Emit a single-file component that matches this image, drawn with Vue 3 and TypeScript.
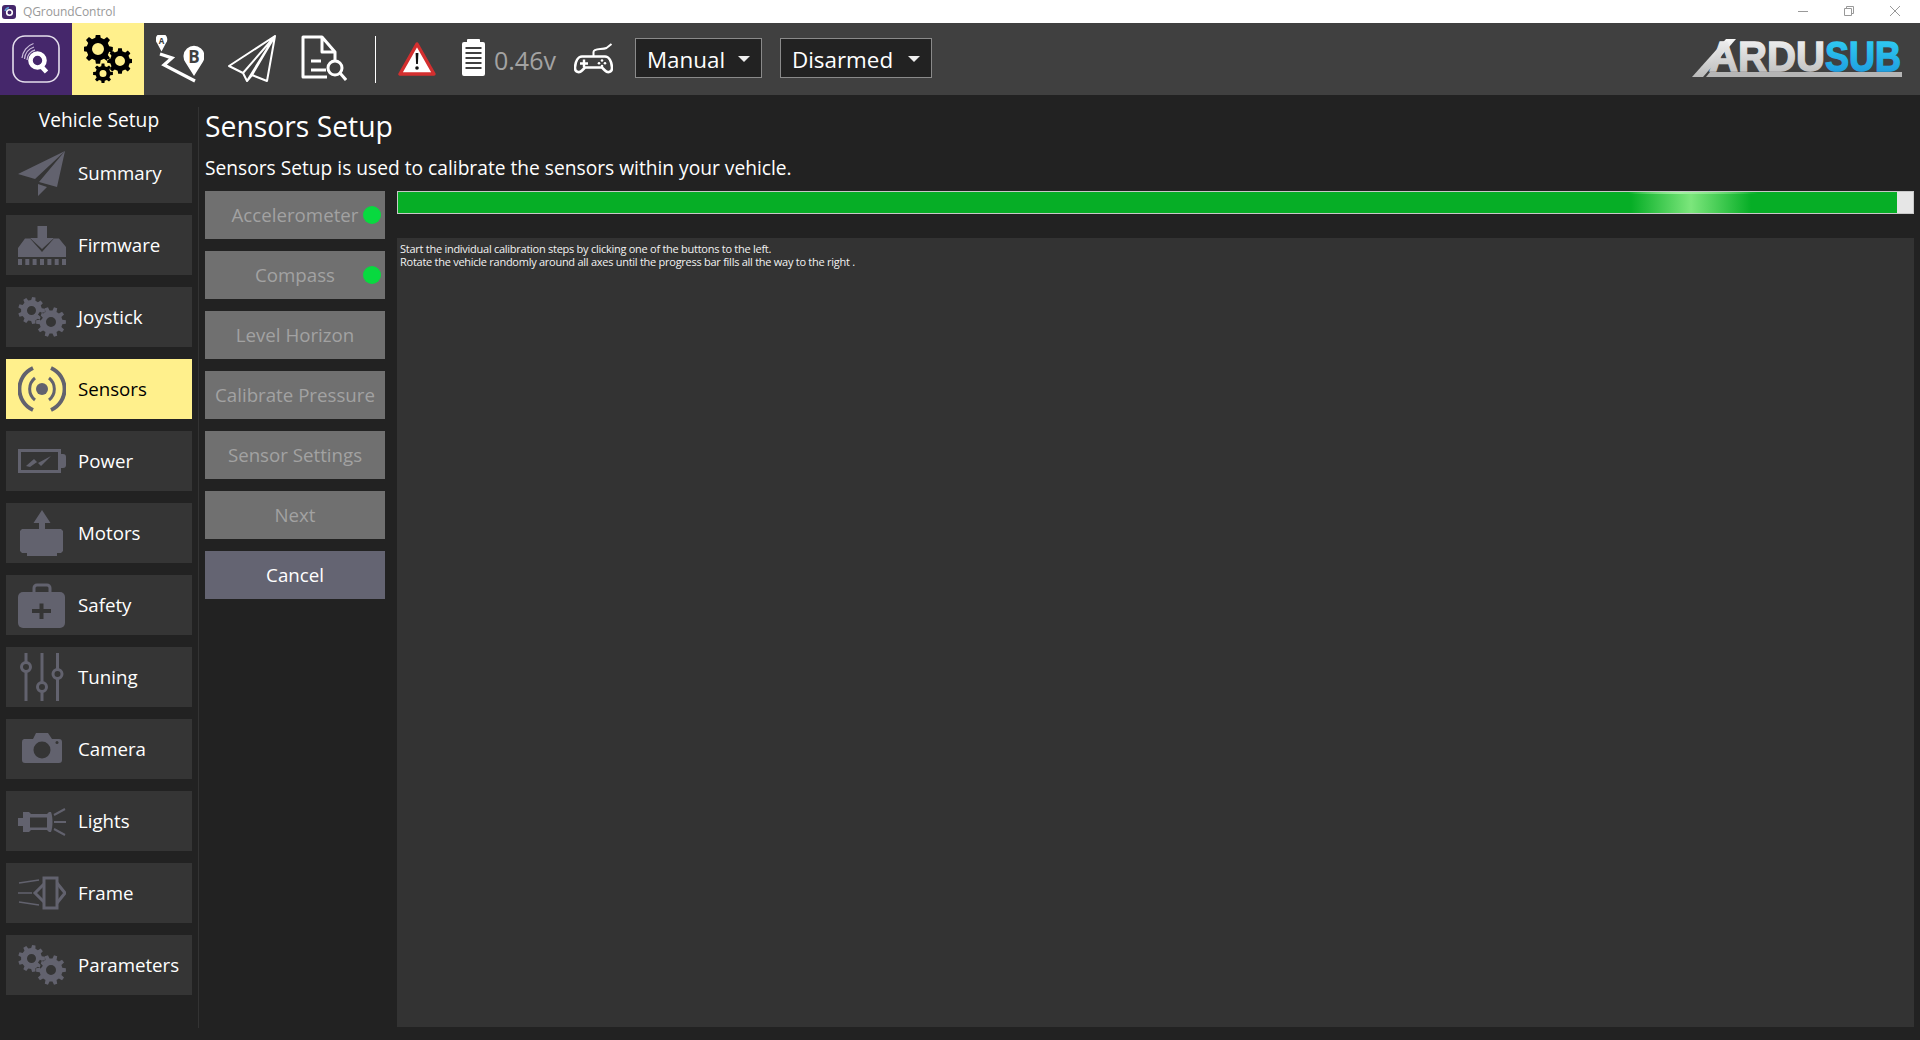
<script setup lang="ts">
function gear(cx: number, cy: number, ro: number, ri: number, rh: number, n: number): string {
  const pts: string[] = []
  const step = (Math.PI * 2) / n
  for (let i = 0; i < n; i++) {
    const a = i * step
    const offs: [number, number][] = [
      [-0.3, ri],
      [-0.18, ro],
      [0.18, ro],
      [0.3, ri],
    ]
    for (const [o, r] of offs) {
      const t = a + o * step
      pts.push(`${(cx + r * Math.cos(t)).toFixed(2)} ${(cy + r * Math.sin(t)).toFixed(2)}`)
    }
  }
  const hole = `M${cx - rh} ${cy}a${rh} ${rh} 0 1 0 ${rh * 2} 0a${rh} ${rh} 0 1 0 ${-rh * 2} 0Z`
  return `M${pts.join('L')}Z${hole}`
}

const smallGears = `${gear(13.5, 17.5, 13.5, 10.5, 4.5, 9)}${gear(33, 29, 15, 11.5, 5, 10)}`
const toolbarGears = `${gear(14, 14, 15, 11.5, 6, 8)}${gear(36, 26, 13, 10, 5, 8)}${gear(19, 38.500, 10, 7.500, 3.500, 8)}`

const items = ['Summary', 'Firmware', 'Joystick', 'Sensors', 'Power', 'Motors', 'Safety', 'Tuning', 'Camera', 'Lights', 'Frame', 'Parameters']

interface CalBtn {
  label: string
  done?: boolean
  active?: boolean
}
const calButtons: CalBtn[] = [
  { label: 'Accelerometer', done: true },
  { label: 'Compass', done: true },
  { label: 'Level Horizon' },
  { label: 'Calibrate Pressure' },
  { label: 'Sensor Settings' },
  { label: 'Next' },
  { label: 'Cancel', active: true },
]
</script>

<template>
  <div class="app">
    <header class="titlebar">
      <svg class="app-icon" viewBox="0 0 14 14" width="14" height="14">
        <rect width="14" height="14" rx="3" fill="#45276b" />
        <circle cx="7.500" cy="7.500" r="2.800" fill="none" stroke="#fff" stroke-width="1.600" />
        <path d="M3 6a5 5 0 0 1 4-3.500" fill="none" stroke="#5b9bd5" stroke-width="1.500" />
      </svg>
      <span class="app-name">QGroundControl</span>
      <div class="win-controls">
        <svg viewBox="0 0 10 10" width="10" height="10"><path d="M0 5.500h10" stroke="#999" fill="none" /></svg>
        <svg viewBox="0 0 10 10" width="10" height="10"><path d="M.5 2.500h7v7h-7zM2.500 2.500v-2h7v7h-2" stroke="#999" fill="none" /></svg>
        <svg viewBox="0 0 10 10" width="10" height="10"><path d="M0 0l10 10M10 0L0 10" stroke="#999" fill="none" /></svg>
      </div>
    </header>

    <nav class="toolbar">
      <div class="tool-btn purple">
        <svg viewBox="0 0 48 48" width="48" height="48">
          <rect x="1" y="1" width="46" height="46" rx="12" fill="none" stroke="#e4deec" stroke-width="1.600" />
          <circle cx="25.500" cy="25.500" r="7" fill="none" stroke="#fff" stroke-width="4.600" />
          <path d="M28 30l6.500 7" stroke="#fff" stroke-width="4.600" fill="none" />
          <path d="M15 25a11 11 0 0 1 8-10M12.500 24a14 14 0 0 1 9.500-12M10 23a17 17 0 0 1 11.500-14.500" fill="none" stroke="#c9bcd9" stroke-width="1.300" />
        </svg>
      </div>
      <div class="tool-btn yellow">
        <svg viewBox="0 0 48 48" width="48" height="48"><path :d="toolbarGears" fill="#000" fill-rule="evenodd" /></svg>
      </div>
      <svg class="t-route" viewBox="0 0 48 48" width="48" height="48">
        <path d="M5.500 16.500L1 8a5.800 5.800 0 1 1 9 0z" fill="#fff" />
        <path d="M38 41l-8.500-13.500a10.500 10.500 0 1 1 17 0z" fill="#fff" />
        <text x="5.600" y="9" class="pin-a">A</text>
        <text x="38" y="27.500" class="pin-b">B</text>
        <path d="M4 19l12 4-8 7 31 16" fill="none" stroke="#fff" stroke-width="3.200" />
      </svg>
      <svg class="t-plane" viewBox="0 0 48 48" width="48" height="48">
        <path d="M47 1L1 31l14 7 4 8 5-6 15 6zM47 1L15 38M47 1L19 46M47 1L24 40" fill="none" stroke="#fff" stroke-width="2" stroke-linejoin="round" />
      </svg>
      <svg class="t-doc" viewBox="0 0 46 48" width="46" height="48">
        <path d="M26 42H2V2h19l13 15v8M21 2v15h13" fill="none" stroke="#fff" stroke-width="3" stroke-linejoin="round" />
        <path d="M10 26h10M10 35h15" stroke="#fff" stroke-width="3" fill="none" />
        <circle cx="34" cy="33" r="7" fill="#404040" stroke="#fff" stroke-width="3" />
        <path d="M39 38l6 7" stroke="#fff" stroke-width="3" fill="none" />
      </svg>
      <div class="t-divider"></div>
      <svg class="t-warn" viewBox="0 0 38 35" width="38" height="35">
        <path d="M19 3L2 33h34z" fill="#fff" stroke="#d32f2f" stroke-width="3.400" stroke-linejoin="round" />
        <path d="M17.600 12h2.800l-.5 11h-1.800z" fill="#111" />
        <circle cx="19" cy="27" r="1.800" fill="#111" />
      </svg>
      <svg class="t-batt" viewBox="0 0 23 37" width="23" height="37">
        <path d="M6 0h11a1 1 0 0 1 1 1v2h3a2 2 0 0 1 2 2v30a2 2 0 0 1-2 2H2a2 2 0 0 1-2-2V5a2 2 0 0 1 2-2h3V1a1 1 0 0 1 1-1z" fill="#fff" />
        <path d="M3.500 9h16M3.500 14h16M3.500 19h16M3.500 24h16M3.500 29h16" stroke="#404040" stroke-width="2.200" />
      </svg>
      <span class="t-volt">0.46v</span>
      <svg class="t-pad" viewBox="0 0 39 31" width="39" height="31">
        <path d="M8 13.500h23c4 0 6.500 5 7 11 .3 4.500-4 6-7 3l-3-3H11l-3 3c-3 3-7.300 1.500-7-3 .5-6 3-11 7-11z" fill="none" stroke="#fff" stroke-width="2.600" />
        <path d="M19.500 13V9c0-4 9-2 13-4l5-4" fill="none" stroke="#fff" stroke-width="2" />
        <path d="M6 20.500h8M10 16.500v8" stroke="#fff" stroke-width="2.400" />
        <circle cx="28" cy="17.500" r="1.300" fill="#fff" /><circle cx="28" cy="23" r="1.300" fill="#fff" />
        <circle cx="25" cy="20.300" r="1.300" fill="#fff" /><circle cx="31" cy="20.300" r="1.300" fill="#fff" />
      </svg>
      <button class="combo combo-manual">Manual<i class="caret"></i></button>
      <button class="combo combo-disarmed">Disarmed<i class="caret"></i></button>
      <svg class="logo" viewBox="0 0 210 38" width="210" height="38">
        <defs>
          <linearGradient id="logoSilver" x1="0" y1="0" x2="0" y2="1">
            <stop offset="0" stop-color="#f8f8f8" /><stop offset="1" stop-color="#b9b9b9" />
          </linearGradient>
          <linearGradient id="logoBlue" x1="0" y1="0" x2="0" y2="1">
            <stop offset="0" stop-color="#33d4f6" /><stop offset="1" stop-color="#1b96dc" />
          </linearGradient>
        </defs>
        <path d="M0 38L34 0h10L11 38z" fill="url(#logoSilver)" />
        <path d="M14 38l4-5h192v5z" fill="#b5b5b5" />
        <text x="17" y="31.500" class="logo-text" textLength="116" lengthAdjust="spacingAndGlyphs" fill="url(#logoSilver)" stroke="url(#logoSilver)">ARDU</text>
        <text x="133" y="31.500" class="logo-text" textLength="76" lengthAdjust="spacingAndGlyphs" fill="url(#logoBlue)" stroke="url(#logoBlue)">SUB</text>
      </svg>
    </nav>

    <div class="body">
      <aside class="sidebar">
        <div class="side-title">Vehicle Setup</div>
        <div class="side-list">
          <div v-for="item in items" :key="item" class="side-btn" :class="{ selected: item === 'Sensors' }">
            <svg class="side-icon" viewBox="0 0 48 48" width="48" height="48">
              <template v-if="item === 'Summary'">
                <path d="M0 25L47 2 17 30zM47 2l-8 36-18-5zM20 35l9 3-9 9z" />
              </template>
              <template v-else-if="item === 'Firmware'">
                <path d="M19.500 5H29v12h7L24 28 12 17h7.500z" />
                <path d="M0 36v-9L7 17.500h5L24 31l12-13.500h5L48 26v10z" />
                <path d="M0 38h4v6H0zM7.300 38h4v6h-4zM14.600 38h4v6h-4zM22 38h4v6h-4zM29.400 38h4v6h-4zM36.700 38h4v6h-4zM44 38h4v6h-4z" />
              </template>
              <template v-else-if="item === 'Joystick' || item === 'Parameters'">
                <path :d="smallGears" fill-rule="evenodd" />
              </template>
              <template v-else-if="item === 'Sensors'">
                <circle cx="24" cy="24" r="6" />
                <path d="M17 13A14 14 0 0 0 17 35M31 13A14 14 0 0 1 31 35" class="ln" stroke-width="3" />
                <path d="M15 3A23 23 0 0 0 15 45M33 3A23 23 0 0 1 33 45" class="ln" stroke-width="4" />
              </template>
              <template v-else-if="item === 'Power'">
                <path d="M1.500 13.500h40v21h-40z" class="ln" stroke-width="3" />
                <path d="M43 17h2a3 3 0 0 1 3 3v8a3 3 0 0 1-3 3h-2z" />
                <path d="M8 29l8-7 4 4 13-7-10 10-4-4-7 5z" />
              </template>
              <template v-else-if="item === 'Motors'">
                <path d="M24 1l8.500 13H27v6h-6v-6h-5.500z" />
                <path d="M4 20h39l2 2v20l-2 2h-4v3H9v-3H4l-2-2V22z" />
              </template>
              <template v-else-if="item === 'Safety'">
                <path d="M16 12V7a3 3 0 0 1 3-3h10a3 3 0 0 1 3 3v5" class="ln" stroke-width="3" />
                <rect x="0" y="11" width="47" height="36" rx="5" />
                <path d="M21.500 22.500h4v5.500h7.500v4h-7.500v6h-4v-6H14v-4h7.500z" class="cut" />
              </template>
              <template v-else-if="item === 'Tuning'">
                <path d="M8 0v48M24 0v48M39.500 0v48" class="ln" stroke-width="3" />
                <circle cx="8" cy="14" r="4.500" class="knob" />
                <circle cx="24" cy="34" r="4.500" class="knob" />
                <circle cx="39.500" cy="21" r="4.500" class="knob" />
              </template>
              <template v-else-if="item === 'Camera'">
                <path d="M6 14h9l3-6h12l4 6h7a3 3 0 0 1 3 3v18a3 3 0 0 1-3 3H7a3 3 0 0 1-3-3V17a3 3 0 0 1 2-3z" />
                <circle cx="24" cy="25" r="8.500" class="cut" />
                <circle cx="39" cy="17.500" r="1.500" class="cut" />
              </template>
              <template v-else-if="item === 'Lights'">
                <path d="M5 15h6l2 2h16l2-2h2c2 5 2 15 0 20h-2l-2-2H13l-2 2H5zM12 20.500v10h17v-10z" fill-rule="evenodd" />
                <path d="M0 21h5v8H0z" />
                <path d="M36 18l11-6M36 25h12M36 32l11 6" class="ln" stroke-width="2" />
              </template>
              <template v-else-if="item === 'Frame'">
                <rect x="26" y="9" width="13" height="30" class="ln" stroke-width="3" />
                <path d="M26 15l-9 9 9 9M39 14l8 10-8 10" class="ln" stroke-width="3" />
                <path d="M1 14l20-3M0 24h14M1 33l20 3" class="ln" stroke-width="1.600" />
              </template>
            </svg>
            <span class="side-label">{{ item }}</span>
          </div>
        </div>
      </aside>

      <main class="main">
        <h1 class="heading">Sensors Setup</h1>
        <p class="desc">Sensors Setup is used to calibrate the sensors within your vehicle.</p>
        <div class="content">
          <div class="cal-list">
            <div v-for="b in calButtons" :key="b.label" class="cal-btn" :class="{ active: b.active }">
              {{ b.label }}
              <i v-if="b.done" class="dot"></i>
            </div>
          </div>
          <div class="cal-right">
            <div class="progress">
              <div class="fill"></div>
              <div class="glow"></div>
              <div class="glow-top"></div>
            </div>
            <div class="panel">
              Start the individual calibration steps by clicking one of the buttons to the left.<br />
              Rotate the vehicle randomly around all axes until the progress bar fills all the way to the right .
            </div>
          </div>
        </div>
      </main>
    </div>
  </div>
</template>

<style>
html, body { margin: 0; background: #222; }
</style>

<style scoped>
.app {
  width: 1920px;
  height: 1040px;
  overflow: hidden;
  display: flex;
  flex-direction: column;
  background: #222;
  color: #fff;
  font-family: "Open Sans", "Noto Sans", sans-serif;
}
.titlebar {
  height: 23px;
  background: #fff;
  display: flex;
  align-items: center;
  padding-left: 2px;
  flex: none;
}
.app-name { margin-left: 7px; font-size: 12px; color: #999; letter-spacing: -0.1px; }
.win-controls {
  margin-left: auto;
  margin-right: 20px;
  display: flex;
  gap: 36px;
  margin-top: -1px;
}
.toolbar {
  height: 72px;
  flex: none;
  background: #404040;
  display: flex;
  align-items: center;
}
.tool-btn {
  width: 72px;
  height: 72px;
  display: flex;
  align-items: center;
  justify-content: center;
}
.purple { background: #45276b; }
.yellow { background: #fff08c; }
.t-route { margin-left: 12px; }
.t-plane { margin-left: 24px; }
.t-doc { margin-left: 25px; }
.t-divider { width: 1px; height: 47px; background: #fff; margin-left: 28px; }
.t-warn { margin-left: 22px; margin-top: -1px; }
.t-batt { margin-left: 26px; margin-top: -3px; }
.t-volt { margin-left: 9px; font-size: 25px; color: #a3a3a3; line-height: 1; margin-top: 2px; }
.t-pad { margin-left: 18px; margin-top: -1px; }
.pin-a, .pin-b { text-anchor: middle; font-family: "Open Sans", sans-serif; font-weight: 700; fill: #404040; }
.pin-a { font-size: 8px; }
.pin-b { font-size: 17px; }
.combo {
  box-sizing: border-box;
  height: 40px;
  background: #222;
  border: 1px solid #8a8a8a;
  color: #fff;
  font: 22.400px "Open Sans", sans-serif;
  padding: 2px 11px 0;
  display: flex;
  align-items: center;
  margin-top: -2px;
}
.combo-manual { margin-left: 22px; width: 127px; }
.combo-disarmed { margin-left: 18px; width: 152px; }
.caret {
  margin-left: auto;
  width: 0;
  height: 0;
  border-left: 6px solid transparent;
  border-right: 6px solid transparent;
  border-top: 6px solid #eee;
}
.logo { margin-left: auto; margin-right: 18px; margin-top: -2px; overflow: visible; }
.logo-text { font-family: "Liberation Sans", sans-serif; font-weight: 700; font-size: 42px; stroke-width: 1.4; }

.body { flex: 1; display: flex; min-height: 0; }
.sidebar {
  box-sizing: border-box;
  width: 199px;
  height: 921px;
  margin-top: 12px;
  padding-left: 6px;
  border-right: 1px solid #333;
  flex: none;
}
.side-title {
  width: 186px;
  text-align: center;
  font-size: 19.200px;
  line-height: 26px;
  margin-bottom: 10px;
}
.side-list { width: 186px; display: flex; flex-direction: column; gap: 12px; }
.side-btn {
  height: 60px;
  background: #353535;
  display: flex;
  align-items: center;
  padding-left: 12px;
  font-size: 18.700px;
}
.side-label { margin-left: 12px; padding-bottom: 2px; }
.side-btn.selected { background: #fff08c; color: #000; }
.side-icon { fill: #62626e; flex: none; }
.side-icon .ln { fill: none; stroke: #62626e; }
.side-icon .cut { fill: #353535; }
.side-icon .knob { fill: #353535; stroke: #62626e; stroke-width: 3; }

.main {
  flex: 1;
  min-width: 0;
  display: flex;
  flex-direction: column;
  padding: 12px 6px 13px 6px;
}
.heading { margin: 0 0 10px; font-size: 28.300px; font-weight: 400; line-height: 38px; }
.desc { margin: 0 0 10px; font-size: 19.200px; line-height: 26px; }
.content { flex: 1; min-height: 0; display: grid; grid-template-columns: 180px 1fr; column-gap: 12px; }
.cal-list { display: flex; flex-direction: column; gap: 12px; }
.cal-btn {
  position: relative;
  box-sizing: border-box;
  height: 48px;
  padding-bottom: 2px;
  background: #707070;
  color: #a2a2a2;
  font-size: 18.700px;
  display: flex;
  align-items: center;
  justify-content: center;
}
.cal-btn.active { background: #646472; color: #fff; }
.dot {
  position: absolute;
  right: 4px;
  top: 15px;
  width: 18px;
  height: 18px;
  border-radius: 50%;
  background: #08d93f;
}
.cal-right { display: flex; flex-direction: column; min-width: 0; }
.progress {
  position: relative;
  box-sizing: border-box;
  height: 23px;
  border: 1px solid #c8c8c8;
  background: #e6e6e6;
  overflow: hidden;
  flex: none;
}
.fill { height: 100%; width: 1499px; background: #06ae26; }
.glow {
  position: absolute;
  top: 0;
  bottom: 0;
  left: 1233px;
  width: 120px;
  background: linear-gradient(90deg, rgba(124, 230, 124, 0), #7ce67c 50%, rgba(124, 230, 124, 0));
}
.glow-top {
  position: absolute;
  top: 0;
  left: 1230px;
  width: 130px;
  height: 2px;
  background: linear-gradient(90deg, rgba(160, 240, 160, 0), #a0f0a0 40%, rgba(160, 240, 160, 0));
}
.panel {
  margin-top: 24px;
  flex: 1;
  background: #333;
  padding: 4px 3px;
  font-size: 11px;
  line-height: 13px;
  letter-spacing: -0.265px;
  color: #f2f2f2;
}
</style>
